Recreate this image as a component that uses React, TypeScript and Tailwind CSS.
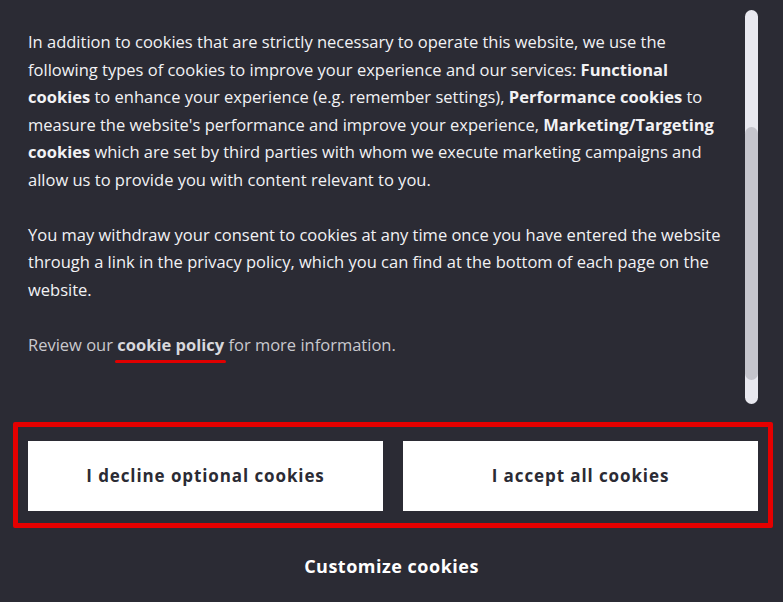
import React from "react";

export default function App() {
  return (
    <div
      className="w-[783px] h-[602px] bg-[#2b2b34] overflow-hidden flex flex-col"
      style={{ fontFamily: '"Open Sans", "Noto Sans", sans-serif' }}
    >
      <div className="flex h-[414px]">
        <div className="flex-1 pl-[28px] pt-[28px] text-[16.5px] leading-[27.5px] text-[#f2f2f4]">
          <p>
            In addition to cookies that are strictly necessary to operate this website, we use the
            <br />
            following types of cookies to improve your experience and our services: <b>Functional</b>
            <br />
            <b>cookies</b> to enhance your experience (e.g. remember settings), <b>Performance cookies</b> to
            <br />
            measure the website's performance and improve your experience, <b>Marketing/Targeting</b>
            <br />
            <b>cookies</b> which are set by third parties with whom we execute marketing campaigns and
            <br />
            allow us to provide you with content relevant to you.
          </p>
          <p className="mt-[27.5px]">
            You may withdraw your consent to cookies at any time once you have entered the website
            <br />
            through a link in the privacy policy, which you can find at the bottom of each page on the
            <br />
            website.
          </p>
          <p className="mt-[27.5px] text-[#c9c9ce]">
            Review our{" "}
            <span className="relative font-bold text-[#d8d8dc]">
              cookie policy
              <span className="absolute left-[-2px] right-[-2px] bottom-[-7px] h-[3px] rounded-full bg-[#e00000]" />
            </span>{" "}
            for more information.
          </p>
        </div>
        <div className="w-[38px] pt-[10px] flex flex-col items-start">
          <div className="w-[13px] h-[394px] rounded-full bg-[#e9e9f0] flex flex-col pt-[117px]">
            <div className="h-[253px] rounded-full bg-[#c5c5cd]" />
          </div>
        </div>
      </div>
      <div className="ml-[13px] mr-[10px] mt-[8px] border-[5px] border-[#e50000] rounded-[2px] px-[10px] pt-[14px] pb-[12px] flex gap-[20px]">
        <button className="flex-1 h-[70px] bg-white text-[#2b2b34] text-[17px] font-bold tracking-[0.9px]">
          I decline optional cookies
        </button>
        <button className="flex-1 h-[70px] bg-white text-[#2b2b34] text-[17px] font-bold tracking-[0.9px]">
          I accept all cookies
        </button>
      </div>
      <div className="flex justify-center mt-[25px] text-white text-[18px] font-bold tracking-[0.5px]">
        Customize cookies
      </div>
    </div>
  );
}
